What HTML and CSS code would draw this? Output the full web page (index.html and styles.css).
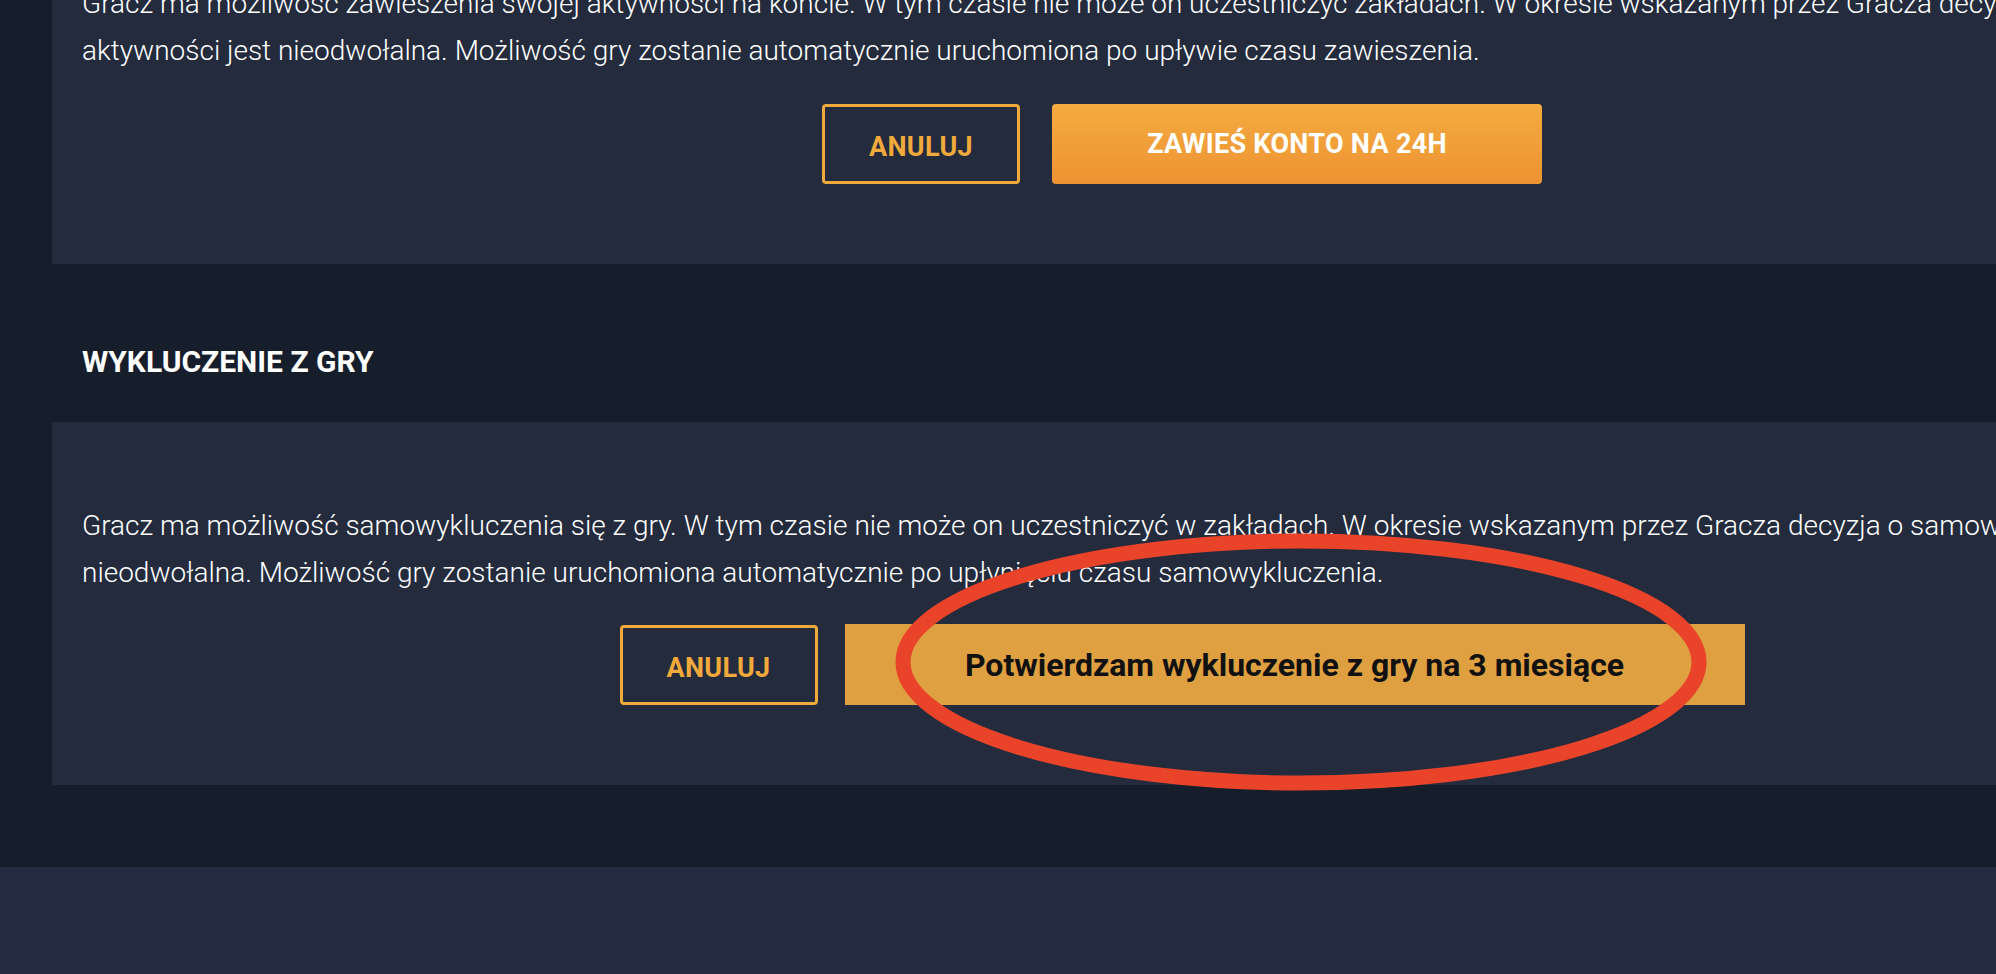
FILE: index.html
```html
<!DOCTYPE html>
<html lang="pl">

<head>
    <meta charset="UTF-8">
    <meta name="viewport" content="width=device-width, initial-scale=1.0">
    <title>Odpowiedzialna gra</title>
    <link rel="stylesheet" href="styles.css">
</head>

<body>
    <main class="settings">
        <section class="panel">
            <p class="panel__text">Gracz ma możliwość zawieszenia swojej aktywności na koncie. W tym czasie nie może on uczestniczyć zakładach. W okresie wskazanym przez Gracza decyzja o zawieszeniu aktywności jest nieodwołalna. Możliwość gry zostanie automatycznie uruchomiona po upływie czasu zawieszenia.</p>
            <div class="panel__actions">
                <button type="button" class="btn btn--outline">Anuluj</button>
                <button type="button" class="btn btn--primary">Zawieś konto na 24h</button>
            </div>
        </section>

        <h2 class="settings__title">Wykluczenie z gry</h2>

        <section class="panel">
            <p class="panel__text">Gracz ma możliwość samowykluczenia się z gry. W tym czasie nie może on uczestniczyć w zakładach. W okresie wskazanym przez Gracza decyzja o samowykluczeniu jest nieodwołalna. Możliwość gry zostanie uruchomiona automatycznie po upłynięciu czasu samowykluczenia.</p>
            <div class="panel__actions panel__actions--confirm">
                <button type="button" class="btn btn--outline">Anuluj</button>
                <button type="button" class="btn btn--confirm">
                    Potwierdzam wykluczenie z gry na 3 miesiące
                    <svg class="btn__mark" width="830" height="270" viewBox="0 0 830 270">
                        <ellipse cx="415" cy="135" rx="398" ry="121" fill="none" stroke="#e9432a" stroke-width="15" />
                    </svg>
                </button>
            </div>
        </section>
    </main>
    <footer class="footer"></footer>
</body>

</html>
```

FILE: styles.css
```css
* {
    margin: 0;
    padding: 0;
    box-sizing: border-box;
}

html,
body {
    overflow: hidden;
}

body {
    background: #161d2b;
    font-family: 'Roboto', 'Liberation Sans', sans-serif;
    color: #fff;
}

.settings {
    width: 2312px;
    margin-top: -100px;
    padding: 0 0 82px 52px;
}

.settings__title {
    padding: 80px 30px 42px;
    font-size: 30px;
    line-height: 36px;
    font-weight: 700;
    text-transform: uppercase;
}

.panel {
    background: #232b3d;
    padding: 80px 30px;
}

.panel__text {
    font-size: 28px;
    font-weight: 300;
    line-height: 47px;
}

.panel__actions {
    display: flex;
    justify-content: center;
    align-items: center;
    gap: 32px;
    margin-top: 30px;
}

.panel__actions--confirm {
    gap: 27px;
    margin-top: 28px;
}

.btn {
    height: 80px;
    font-family: 'Roboto', 'Liberation Sans', sans-serif;
    font-size: 27px;
    font-weight: 700;
    letter-spacing: 0.3px;
    text-transform: uppercase;
    border-radius: 4px;
    cursor: pointer;
}

.btn--outline {
    width: 198px;
    padding-top: 6px;
    background: transparent;
    border: 3px solid #f0a93b;
    color: #f0a93b;
}

.btn--primary {
    width: 490px;
    border: 0;
    background: linear-gradient(180deg, #f4ab3f 0%, #ee9333 100%);
    color: #fff;
}

.btn--confirm {
    position: relative;
    width: 900px;
    height: 81px;
    border: 0;
    border-radius: 0;
    background: #dfa041;
    color: #111;
    font-size: 32px;
    letter-spacing: 0;
    text-transform: none;
}

.btn__mark {
    position: absolute;
    left: 41px;
    top: -97px;
    pointer-events: none;
}

.footer {
    height: 120px;
    background: #222b41;
}
```
